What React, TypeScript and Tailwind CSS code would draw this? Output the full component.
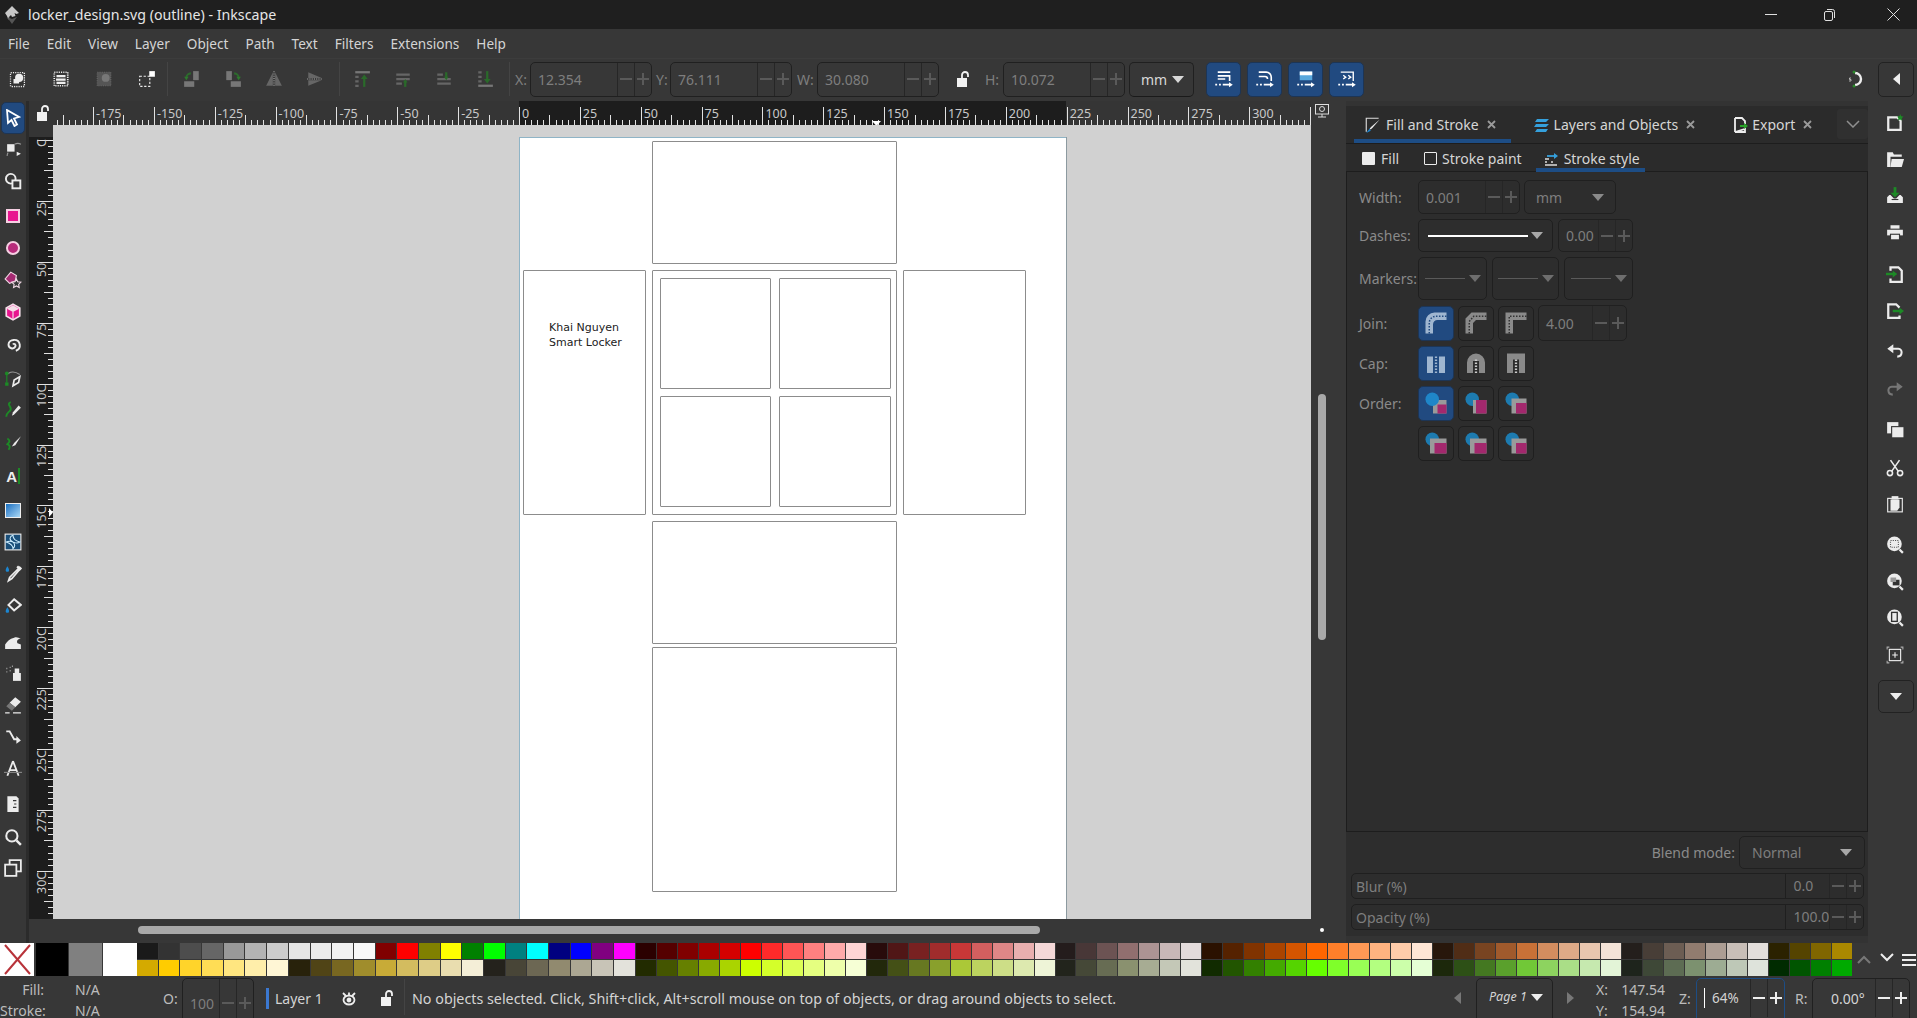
import { ReactNode } from "react";
import clsx from "clsx";

const MENU = ["File", "Edit", "View", "Layer", "Object", "Path", "Text", "Filters", "Extensions", "Help"];

const PALETTE_TOP = [
  "#1a1a1a", "#333333", "#4d4d4d", "#666666", "#999999", "#b3b3b3", "#cccccc", "#e6e6e6", "#ececec", "#f2f2f2", "#f9f9f9",
  "#800000", "#ff0000", "#808000", "#ffff00", "#008000", "#00ff00", "#008080", "#00ffff", "#000080", "#0000ff", "#800080", "#ff00ff",
  "#2b0000", "#550000", "#800000", "#aa0000", "#d40000", "#ff0000", "#ff2a2a", "#ff5555", "#ff8080", "#ffaaaa", "#ffd5d5",
  "#280b0b", "#501616", "#782121", "#a02c2c", "#c83737", "#d35f5f", "#de8787", "#e9afaf", "#f4d7d7",
  "#241c1c", "#483737", "#6c5353", "#916f6f", "#ac9393", "#c8b7b7", "#e3dbdb",
  "#2b1100", "#552200", "#803300", "#aa4400", "#d45500", "#ff6600", "#ff7f2a", "#ff9955", "#ffb380", "#ffccaa", "#ffe6d5",
  "#28170b", "#502d16", "#784421", "#a05a2c", "#c87137", "#d38d5f", "#deaa87", "#e9c6af", "#f4e3d7",
  "#241f1c", "#483e37", "#6c5d53", "#917c6f", "#ac9d93", "#c8beb7", "#e3dedb",
  "#2b2200", "#554400", "#806600", "#aa8800",
];

const PALETTE_BOTTOM = [
  "#d4aa00", "#ffcc00", "#ffd42a", "#ffdd55", "#ffe680", "#ffeeaa", "#fff6d5",
  "#28220b", "#504416", "#786721", "#a08d2c", "#c8ab37", "#d3bc5f", "#decd87", "#e9ddaf", "#f4eed7",
  "#24221c", "#484537", "#6c6753", "#918a6f", "#aca793", "#c8c4b7", "#e3e2db",
  "#222b00", "#445500", "#668000", "#88aa00", "#aad400", "#ccff00", "#d4ff2a", "#ddff55", "#e5ff80", "#eeffaa", "#f6ffd5",
  "#22280b", "#445016", "#677821", "#89a02c", "#abc837", "#bcd35f", "#cdde87", "#dde9af", "#eef4d7",
  "#22241c", "#454837", "#676c53", "#8a916f", "#a7ac93", "#c4c8b7", "#e2e3db",
  "#112b00", "#225500", "#338000", "#44aa00", "#55d400", "#66ff00", "#7fff2a", "#99ff55", "#b3ff80", "#ccffaa", "#e5ffd5",
  "#1c280b", "#2d5016", "#447821", "#5aa02c", "#71c837", "#8dd35f", "#aade87", "#c6e9af", "#e3f4d7",
  "#1e241c", "#3e4837", "#5d6c53", "#7c916f", "#9dac93", "#bec8b7", "#dee3db",
  "#002b00", "#005500", "#008000", "#00aa00",
];

function Ic({ children, size = 18, className }: { children: ReactNode; size?: number; className?: string }) {
  return (
    <svg width={size} height={size} viewBox="0 0 16 16" fill="none" className={clsx("shrink-0", className)}>
      {children}
    </svg>
  );
}

function Caret({ color = "#d8d8d8", className }: { color?: string; className?: string }) {
  return (
    <svg width="12" height="7" viewBox="0 0 12 7" className={clsx("shrink-0", className)}>
      <path d="M0 0h12L6 7z" fill={color} />
    </svg>
  );
}

function Lock({ className }: { className?: string }) {
  return (
    <svg width="13" height="16" viewBox="0 0 13 16" className={clsx("shrink-0", className)}>
      <rect x="0" y="7" width="10" height="9" fill="#f2f2f2" />
      <path d="M5 7V4a3 3 0 0 1 6 0v2" fill="none" stroke="#f2f2f2" strokeWidth="1.8" />
    </svg>
  );
}

function PlusMinus({ color }: { color: string }) {
  return (
    <>
      <div className="flex h-full w-[17px] items-center justify-center border-l border-[#262626]">
        <div className="h-[2px] w-[12px]" style={{ background: color }} />
      </div>
      <div className="relative flex h-full w-[17px] items-center justify-center border-l border-[#262626]">
        <div className="h-[2px] w-[12px]" style={{ background: color }} />
        <div className="absolute h-[12px] w-[2px]" style={{ background: color }} />
      </div>
    </>
  );
}

function Spin({ value, className, bright, textClass }: { value: string; className?: string; bright?: boolean; textClass?: string }) {
  return (
    <div className={clsx("flex items-center overflow-hidden rounded-[5px] border border-[#202020]", className)}>
      <span className={clsx("flex-1 pl-[7px] text-[14px]", bright ? "text-[#d8d8d8]" : "text-[#7e7e7e]", textClass)}>{value}</span>
      <PlusMinus color={bright ? "#e8e8e8" : "#5a5a5a"} />
    </div>
  );
}

function ToolbarIcons() {
  const dots = { stroke: "#eee", strokeDasharray: "1 1", strokeWidth: 1.5 };
  return (
    <>
      <div className="flex w-[167px] items-center pl-[9px] gap-[25px]">
        <Ic><rect x="1.5" y="2.5" width="12" height="12" {...dots} /><rect x="2" y="3" width="11" height="11" fill="#333" /><circle cx="9" cy="7" r="3.6" fill="#eee" /><rect x="4" y="8" width="5" height="4" fill="#eee" /></Ic>
        <Ic><rect x="2" y="2" width="12" height="12" {...dots} /><path d="M4 5.5h8M3.6 8.5h8.5M4 11.5h8" stroke="#eee" strokeWidth="2" /></Ic>
        <Ic><rect x="2" y="2" width="12" height="12" fill="#555" stroke="#666" strokeDasharray="1 1" /><circle cx="9.5" cy="7" r="3.5" fill="#777" /></Ic>
        <Ic><rect x="1.5" y="5.5" width="9" height="9" stroke="#eee" strokeDasharray="2 1.5" /><rect x="10" y="1" width="5" height="5" fill="#fff" /></Ic>
      </div>
      <div className="h-[34px] w-px bg-[#444]" />
      <div className="flex w-[171px] items-center gap-[23px] pl-[15px]">
        <Ic><rect x="9" y="1" width="5" height="8" fill="#777" /><rect x="1" y="10" width="9" height="5" fill="#777" /><path d="M7 3a4 4 0 0 0-4 4" stroke="#2d6b2d" strokeWidth="1.8" /><path d="M1 6h4L3 9z" fill="#2d7a2d" /></Ic>
        <Ic><rect x="2" y="1" width="5" height="8" fill="#777" /><rect x="6" y="10" width="9" height="5" fill="#777" /><path d="M9 3a4 4 0 0 1 4 4" stroke="#2d6b2d" strokeWidth="1.8" /><path d="M11 6h4l-2 3z" fill="#2d7a2d" /></Ic>
        <Ic><path d="M7 2v12H1zM9 2l6 12H9z" fill="#666" /><path d="M8 1v14" stroke="#aaa" strokeDasharray="1 1" /></Ic>
        <Ic><path d="M2 2l12 5H2zM2 14l12-5H2z" fill="#666" /><path d="M1 8h14" stroke="#aaa" strokeDasharray="1 1" /></Ic>
      </div>
      <div className="h-[34px] w-px bg-[#444]" />
      <div className="flex w-[169px] items-center gap-[23px] pl-[13px]">
        <Ic><path d="M2 2h13" stroke="#777" strokeWidth="2" /><path d="M2 6h3M2 10h3M2 14h3" stroke="#666" strokeWidth="2" /><path d="M10 15V6" stroke="#2a6a2a" strokeWidth="2" /><path d="M7 8l3-4 3 4z" fill="#2a6a2a" /></Ic>
        <Ic><path d="M2 4h12M2 8h12M2 12h5" stroke="#666" strokeWidth="2" /><path d="M10 15v-5" stroke="#2a6a2a" strokeWidth="2" /><path d="M8 11l2-3 2 3z" fill="#2a6a2a" /></Ic>
        <Ic><path d="M2 4h5M2 8h12M2 12h12" stroke="#666" strokeWidth="2" /><path d="M10 2v5" stroke="#2a6a2a" strokeWidth="2" /><path d="M8 6l2 3 2-3z" fill="#2a6a2a" /></Ic>
        <Ic><path d="M2 14h13" stroke="#777" strokeWidth="2" /><path d="M2 2h3M2 6h3M2 10h3" stroke="#666" strokeWidth="2" /><path d="M10 1v9" stroke="#2a6a2a" strokeWidth="2" /><path d="M7 8l3 4 3-4z" fill="#2a6a2a" /></Ic>
      </div>
      <div className="h-[34px] w-px bg-[#444]" />
    </>
  );
}

function SnapIcon({ glyph }: { glyph: ReactNode }) {
  return (
    <div className="flex h-[35px] w-[35px] items-center justify-center rounded-[5px] border border-[#1d3555] bg-[#214a80]">
      <Ic size={20}>
        {glyph}
        <path d="M1 12.5h1.5M4 12.5h1.5M7 12.5h6" stroke="#fff" strokeWidth="1.5" />
        <path d="M12 10.5l3 2-3 2z" fill="#fff" />
      </Ic>
    </div>
  );
}

function TopBars() {
  return (
    <>
      <div className="flex h-[29px] items-center bg-[#1f1f1f]">
        <svg width="18" height="20" viewBox="0 0 18 20" className="ml-[3px]">
          <path d="M9 1l7 7-2.5 1-2-1 1 3-3.5 1-1-2-2 2 1 3-2-1-1-3L2 8z" fill="#c8c8c8" />
          <path d="M4 12l5 2 5-2-5 7z" fill="#555" />
        </svg>
        <span className="ml-[7px] text-[14.2px] text-[#e6e6e6]">locker_design.svg (outline) - Inkscape</span>
        <div className="ml-auto flex items-center">
          <div className="mr-[46px] h-px w-[12px] bg-[#e0e0e0]" />
          <svg width="13" height="13" viewBox="0 0 13 13" className="mr-[51px]" fill="none" stroke="#e0e0e0">
            <rect x="1.5" y="3.5" width="8" height="9" rx="1.5" />
            <path d="M4 1.5h5.5a2 2 0 0 1 2 2V10" />
          </svg>
          <svg width="13" height="13" viewBox="0 0 13 13" className="mr-[17px]" stroke="#e0e0e0">
            <path d="M.5.5l12 12M12.5.5l-12 12" />
          </svg>
        </div>
      </div>
      <div className="flex h-[29px] items-center gap-[17px] bg-[#373737] pl-[8px] pt-[2px] text-[13.6px] text-[#d4d4d4]">
        {MENU.map((item) => (
          <span key={item}>{item}</span>
        ))}
      </div>
      <div className="flex h-[43px] items-center border-t border-[#3c3c3c] bg-[#373737] pb-[2px]">
        <ToolbarIcons />
        <span className="ml-[5px] w-[15px] text-[14px] text-[#7e7e7e]">X:</span>
        <Spin value="12.354" className="h-[35px] w-[122px]" />
        <span className="ml-[4px] w-[14px] text-[14px] text-[#7e7e7e]">Y:</span>
        <Spin value="76.111" className="h-[35px] w-[122px]" />
        <span className="ml-[5px] w-[20px] text-[14px] text-[#7e7e7e]">W:</span>
        <Spin value="30.080" className="h-[35px] w-[122px]" />
        <Lock className="ml-[18px]" />
        <span className="ml-[15px] w-[18px] text-[14px] text-[#7e7e7e]">H:</span>
        <Spin value="10.072" className="h-[35px] w-[122px]" />
        <div className="ml-[4px] flex h-[35px] w-[65px] items-center gap-[5px] rounded-[5px] border border-[#202020] border-b-[#1a1a1a] pl-[11px] text-[14px] text-[#d8d8d8]">
          mm <Caret />
        </div>
        <div className="ml-[12px] flex gap-[6px]">
          <SnapIcon glyph={<path d="M3 2.5h10M3 5.5h9.5v4M3 8h6" stroke="#fff" strokeWidth="1.3" />} />
          <SnapIcon glyph={<path d="M3 2.5h6a4 4 0 0 1 4 4v3M3 6h5a2 2 0 0 1 2 2" stroke="#fff" strokeWidth="1.3" />} />
          <SnapIcon glyph={<><rect x="3" y="2" width="10" height="7" fill="#59a8dd" /><path d="M3 2h10v3H3z" fill="#fff" /></>} />
          <SnapIcon glyph={<path d="M3 2.5h10v7M5 5l2 1.5L5 8M9 5l2 1.5L9 8" stroke="#fff" strokeWidth="1.1" />} />
        </div>
        <div className="ml-auto flex items-center">
          <svg width="20" height="20" viewBox="0 0 20 20" className="mr-[13px]" fill="none">
            <path d="M10 4a6 6 0 0 1 0 12" stroke="#eee" strokeWidth="2.4" />
            <circle cx="9" cy="3" r="1.5" fill="#2a8a2a" />
            <circle cx="9" cy="17" r="1.5" fill="#2a8a2a" />
            <path d="M6 9H4.500v1.500H6V12H4" stroke="#ccc" strokeWidth=".8" />
          </svg>
          <div className="mr-[3px] flex h-[35px] w-[36px] items-center justify-center rounded-[5px] border border-[#222]">
            <svg width="7" height="12" viewBox="0 0 7 12"><path d="M7 0v12L0 6z" fill="#eee" /></svg>
          </div>
        </div>
      </div>
    </>
  );
}

function ToolIcon({ y, children }: { y: string; children: ReactNode }) {
  return <div className={clsx("absolute left-[3px] flex h-[20px] w-[20px] items-center justify-center", y)}>{children}</div>;
}

function LeftTools() {
  const w = "#ececec";
  const g = "#1d8a26";
  const b = "#1c86d1";
  return (
    <div className="relative h-full w-[29px] shrink-0 border-r-[3px] border-[#2b2b2b] bg-[#373737]">
      <div className="absolute left-[1px] top-[1px] flex h-[32px] w-[24px] items-center justify-center rounded-[5px] border border-[#1d3555] bg-[#214a80]">
        <svg width="16" height="18" viewBox="0 0 16 18"><path d="M2 1l12 7-5 1.500 3 6-2.500 1.500-3-6L3 14z" fill="#214a80" stroke="#fff" strokeWidth="1.800" /></svg>
      </div>
      <ToolIcon y="top-[38px]"><Ic size={17}><rect x="2" y="3" width="7" height="7" fill={w} /><path d="M9 3c2-1 4-1 6 0M2 14c0-1 0-2 1-3" stroke="#999" /><path d="M11 10l4 2-4 2z" fill={w} /></Ic></ToolIcon>
      <ToolIcon y="top-[70px]"><Ic size={18}><circle cx="6" cy="6" r="4.300" stroke={w} strokeWidth="1.700" /><rect x="7.500" y="7.500" width="7" height="7" stroke={w} strokeWidth="1.700" fill="#373737" /></Ic></ToolIcon>
      <ToolIcon y="top-[105px]"><div className="h-[14px] w-[14px] border-2 border-[#f5cfe2] bg-[#e8158f]" /></ToolIcon>
      <ToolIcon y="top-[137px]"><div className="h-[14px] w-[14px] rounded-full border-2 border-[#f5cfe2] bg-[#b82a7b]" /></ToolIcon>
      <ToolIcon y="top-[169px]"><Ic size={18}><path d="M6 1l5 3-1 5-5 2-4-4z" fill="#a52a72" stroke="#f0d8e4" /><path d="M11 7l1.200 2.500 2.800.4-2 2 .5 2.800-2.500-1.400-2.500 1.400.5-2.800-2-2 2.800-.4z" fill="#373737" stroke="#f0d8e4" /></Ic></ToolIcon>
      <ToolIcon y="top-[201px]"><Ic size={18}><path d="M8 1l6 3.500v7L8 15l-6-3.500v-7z" fill="#e8158f" stroke="#f5dfe9" strokeWidth="1.500" /><path d="M2.500 5L8 8l5.500-3L8 2z" fill="#f5dfe9" /><path d="M8 8v7" stroke="#f5dfe9" /></Ic></ToolIcon>
      <ToolIcon y="top-[233px]"><Ic size={18}><path d="M8 8.500c1-1.500 3 0 2 2-1.500 2.500-6 1.500-6-2 0-5 9-6 10 0 .5 3.500-2 5-3.500 5.500" stroke={w} strokeWidth="1.700" /></Ic></ToolIcon>
      <ToolIcon y="top-[268px]"><Ic size={18}><rect x="1" y="11" width="3" height="3" fill={g} /><circle cx="2.500" cy="3" r="1.700" fill={g} /><path d="M2.500 4v7" stroke={g} /><path d="M4 3c3-2 7-1 10 1" stroke="#999" /><path d="M14 6l-1 5-5 3 1-5z" fill="#373737" stroke={w} strokeWidth="1.500" /></Ic></ToolIcon>
      <ToolIcon y="top-[299px]"><Ic size={18}><path d="M6 1C1 3 9 6 5 9c-2 2-3 2-3 5" stroke={g} strokeWidth="1.700" /><path d="M9 12l-2 1 1-3 5-6 2 2z" fill={w} /></Ic></ToolIcon>
      <ToolIcon y="top-[332px]"><Ic size={18}><path d="M3 4c3 2 2 3 0 5 2 1 3 2 1 5" stroke={g} strokeWidth="1.700" /><path d="M15 2L9 8l-2 3 3-1z" fill={w} /></Ic></ToolIcon>
      <ToolIcon y="top-[365px]"><span className="font-['Liberation_Sans'] text-[15px] font-bold leading-none text-[#eee]">A</span><div className="ml-[1px] h-[16px] w-[1.500px] bg-[#1d8a26]" /></ToolIcon>
      <ToolIcon y="top-[399px]"><div className="h-[15px] w-[16px] border border-[#eee] bg-gradient-to-br from-[#0f6fc0] to-[#a8d8f5]" /></ToolIcon>
      <ToolIcon y="top-[431px]"><Ic size={18}><rect x="1" y="1" width="14" height="14" fill="#1a4f7a" stroke={w} /><path d="M8 8c-4-2-3-5 0-6 0 3 2 5 6 6-3 2-5 0-6 0 3 3 1 5 0 6 0-3-3-5-6-6 2-1 4-1 6 0" stroke="#cdeeff" strokeWidth=".9" /></Ic></ToolIcon>
      <ToolIcon y="top-[463px]"><Ic size={18}><path d="M3 1c2 3 2 5 0 5s-2-2 0-5z" fill={b} /><path d="M14 2l1 1-2 2-6 7-3 2 1-3 7-7z" fill="#373737" stroke={w} strokeWidth="1.500" /><path d="M11 2l3 3 1.500-1.500-3-3z" fill={w} /></Ic></ToolIcon>
      <ToolIcon y="top-[495px]"><Ic size={18}><path d="M9 2l6 5-6 5-5-5z" fill="#373737" stroke={w} strokeWidth="1.800" /><path d="M3 9c2 3 2 5 0 5s-2-2 0-5z" fill={b} /></Ic></ToolIcon>
      <ToolIcon y="top-[530px]"><Ic size={18}><path d="M1 15v-4c2-3 4-5 8-6 2-1 4 0 6 1-3 0-4 2-3 4l3 1v4z" fill={w} /></Ic></ToolIcon>
      <ToolIcon y="top-[562px]"><Ic size={18}><rect x="8" y="8" width="7" height="7" fill={w} /><rect x="9.500" y="4" width="4" height="4" fill={w} /><path d="M2 4h1M5 3h1M2 7h1M5 6h1M7 2h1" stroke="#999" strokeWidth="1.200" /></Ic></ToolIcon>
      <ToolIcon y="top-[594px]"><Ic size={18}><path d="M10 1l5 4-5 5-5-4z" fill={w} /><path d="M5 6l5 4-3 3-5-4z" fill="#777" /><path d="M1 15h4M8 15h7" stroke={w} strokeWidth="1.200" /></Ic></ToolIcon>
      <ToolIcon y="top-[626px]"><Ic size={18}><path d="M2 3l3 0 4 7 3 0" stroke={w} strokeWidth="1.700" /><path d="M11 7l4 4-4 3z" fill={w} /></Ic></ToolIcon>
      <ToolIcon y="top-[658px]"><Ic size={18}><path d="M8 1L3 14M8 1l5 13M5 9h6" stroke={w} strokeWidth="1.600" /><path d="M0 11h16" stroke="#888" /></Ic></ToolIcon>
      <ToolIcon y="top-[693px]"><Ic size={18}><path d="M3 1h8l2 2v12H3z" fill={w} /><path d="M8 5h3M9 8h2M8 11h3" stroke="#373737" /></Ic></ToolIcon>
      <ToolIcon y="top-[726px]"><Ic size={18}><circle cx="7" cy="7" r="5" stroke={w} strokeWidth="1.800" /><path d="M11 11l4 4" stroke={w} strokeWidth="2.200" /></Ic></ToolIcon>
      <ToolIcon y="top-[757px]"><Ic size={18}><rect x="1" y="5" width="10" height="10" stroke={w} strokeWidth="1.600" /><path d="M5 5V1h10v10h-4" stroke={w} strokeWidth="1.600" /></Ic></ToolIcon>
    </div>
  );
}

function HRuler() {
  const origin = 466;
  const step = 60.85 / 10;
  const ticks = Array.from({ length: 208 }, (_, i) => i - 77);
  return (
    <svg width="1258" height="24" className="block">
      <rect width="1258" height="24" fill="#353535" />
      <rect x={origin} width="547" height="24" fill="#1d1d1d" />
      {ticks.map((i) => {
        const x = Math.round(origin + i * step) + 0.5;
        const major = i % 10 === 0;
        const mid = i % 5 === 0;
        return <line key={i} x1={x} x2={x} y1={major ? 6 : mid ? 14 : 19} y2={24} stroke="#e2e2e2" />;
      })}
      {ticks
        .filter((i) => i % 10 === 0)
        .map((i) => (
          <text key={i} x={origin + i * step + 3} y={17} fontSize="12.500" fontFamily="Noto Sans, sans-serif" fill="#c9c9c9">
            {i * 2.5}
          </text>
        ))}
      <path d="M819 20h9l-4.500 5z" fill="#fff" />
    </svg>
  );
}

function VRuler() {
  const origin = 15;
  const step = 60.9 / 10;
  const ticks = Array.from({ length: 130 }, (_, i) => i);
  const label = (v: number) => {
    const s = String(v);
    return v === 0 ? "C" : v >= 100 && s.endsWith("0") ? s.slice(0, -1) + "C" : s;
  };
  return (
    <svg width="24" height="794" className="block">
      <rect width="24" height="794" fill="#1d1d1d" />
      <rect width="24" height="12" fill="#353535" />
      {ticks.map((i) => {
        const y = Math.round(origin + i * step) + 0.5;
        const major = i % 10 === 0;
        const mid = i % 5 === 0;
        return <line key={i} y1={y} y2={y} x1={major ? 8 : mid ? 15 : 19} x2={24} stroke="#e2e2e2" />;
      })}
      {ticks
        .filter((i) => i % 10 === 0)
        .map((i) => (
          <text key={i} transform={`translate(17 ${i === 0 ? origin - 1 : origin + i * step + 1}) rotate(-90)`} textAnchor="end" fontSize="12.500" fontFamily="Noto Sans, sans-serif" fill="#c9c9c9">
            {label(i * 2.5)}
          </text>
        ))}
      <path d="M20 383l4 4.500-4 4.500z" fill="#fff" />
    </svg>
  );
}

function Canvas() {
  const box = "absolute rounded-[1px] border border-[#8c8c8c]";
  return (
    <div className="relative h-[794px] w-[1258px] overflow-hidden bg-[#d1d1d1]">
      <div className="absolute left-[466px] top-[12px] h-[800px] w-[547px] border-l border-t border-[#8fb4c6] bg-white shadow-[1px_0_0_#8c9aa0]">
        <div className={clsx(box, "left-[132px] top-[3px] h-[123px] w-[245px]")} />
        <div className={clsx(box, "left-[3px] top-[132px] h-[245px] w-[123px]")}>
          <div className="absolute left-[25px] top-[49px] font-['DejaVu_Sans'] text-[11px] leading-[15px] text-[#222]">
            <div>Khai Nguyen</div>
            <div>Smart Locker</div>
          </div>
        </div>
        <div className={clsx(box, "left-[132px] top-[132px] h-[245px] w-[245px]")} />
        <div className={clsx(box, "left-[140px] top-[140px] h-[111px] w-[111px]")} />
        <div className={clsx(box, "left-[259px] top-[140px] h-[111px] w-[112px]")} />
        <div className={clsx(box, "left-[140px] top-[258px] h-[111px] w-[111px]")} />
        <div className={clsx(box, "left-[259px] top-[258px] h-[111px] w-[112px]")} />
        <div className={clsx(box, "left-[383px] top-[132px] h-[245px] w-[123px]")} />
        <div className={clsx(box, "left-[132px] top-[383px] h-[123px] w-[245px]")} />
        <div className={clsx(box, "left-[132px] top-[509px] h-[245px] w-[245px]")} />
      </div>
    </div>
  );
}

function Workspace() {
  return (
    <div className="grid w-[1317px] shrink-0 grid-cols-[24px_1258px_35px] grid-rows-[24px_794px_24px] bg-[#373737]">
      <div className="flex items-center justify-center bg-[#353535] pl-[4px]">
        <Lock />
      </div>
      <HRuler />
      <div className="flex items-start justify-start pl-[4px] pt-[3px]">
        <svg width="14" height="14" viewBox="0 0 14 14" fill="none" stroke="#ddd">
          <rect x=".5" y=".5" width="13" height="9.500" />
          <circle cx="7" cy="5" r="2.500" />
          <path d="M7 10v3M3 13h8" />
        </svg>
      </div>
      <VRuler />
      <Canvas />
      <div className="relative">
        <div className="absolute left-[7px] top-[269px] h-[246px] w-[8px] rounded-full bg-[#a9a9a9]" />
      </div>
      <div />
      <div className="relative">
        <div className="absolute left-[85px] top-[7px] h-[8px] w-[902px] rounded-full bg-[#a9a9a9]" />
      </div>
      <div className="relative">
        <div className="absolute left-[9px] top-[9px] h-[4px] w-[4px] rounded-full bg-white" />
      </div>
    </div>
  );
}

function Tab({ icon, label, className, closeClass }: { icon: ReactNode; label: string; className?: string; closeClass?: string }) {
  return (
    <div className={clsx("flex h-full items-center", className)}>
      {icon}
      <span className="ml-[4px] text-[14px] text-[#d6d6d6]">{label}</span>
      <svg width="9" height="9" viewBox="0 0 9 9" stroke="#9a9a9a" strokeWidth="1.800" className={clsx("ml-[8px]", closeClass)}>
        <path d="M1 1l7 7M8 1l-7 7" />
      </svg>
    </div>
  );
}

function Square({ active, children }: { active?: boolean; children: ReactNode }) {
  return (
    <div className={clsx("flex h-[35px] w-[36px] items-center justify-center rounded-[5px] border", active ? "border-[#1d3555] bg-[#214a80]" : "border-[#1f1f1f]")}>
      <Ic size={24}>{children}</Ic>
    </div>
  );
}

function Order({ active, variant }: { active?: boolean; variant: number }) {
  const blue = active ? "#1f86c9" : "#1d7bb0";
  const pink = "#a3286d";
  const grey = "#9a9a9a";
  return (
    <Square active={active}>
      {variant === 0 ? (
        <>
          <rect x="6" y="6" width="9" height="9" fill={grey} />
          <rect x="9" y="9" width="6" height="6" fill={pink} />
          <circle cx="5.500" cy="5.500" r="4.500" fill={blue} />
        </>
      ) : variant === 1 ? (
        <>
          <circle cx="5.500" cy="5.500" r="4.500" fill={blue} />
          <rect x="6" y="6" width="9" height="9" fill={grey} />
          <rect x="8" y="6" width="7" height="9" fill={pink} />
        </>
      ) : variant === 2 ? (
        <>
          <circle cx="5.500" cy="5.500" r="4.500" fill={blue} />
          <rect x="5" y="5" width="10" height="10" fill={grey} />
          <rect x="8" y="8" width="7" height="7" fill={pink} />
        </>
      ) : (
        <>
          <circle cx="5.500" cy="5.500" r="4.500" fill={blue} />
          <rect x="4" y="5" width="11" height="10" fill={grey} />
          <rect x="7" y="8" width="8" height="7" fill={pink} />
        </>
      )}
    </Square>
  );
}

function Label({ children, className = "w-[59px]" }: { children?: ReactNode; className?: string }) {
  return <span className={clsx("shrink-0 text-[14px] text-[#8a8a8a]", className)}>{children}</span>;
}

function MarkerSelect({ className }: { className: string }) {
  return (
    <div className={clsx("flex h-[43px] items-center justify-center gap-[4px] rounded-[5px] border border-[#1f1f1f]", className)}>
      <div className="h-px w-[40px] bg-[#5a5a5a]" />
      <Caret color="#6e6e6e" />
    </div>
  );
}

function Panel() {
  return (
    <div className="flex w-[522px] shrink-0 flex-col bg-[#333333] pt-[5px]">
      <div className="relative flex h-[37px] items-center bg-[#2b2b2b]">
        <div className="absolute bottom-0 left-[8px] h-[4px] w-[157px] bg-[#1d4d85]" />
        <Tab
          className="ml-[18px]"
          icon={
            <Ic size={18}>
              <path d="M13 2H2v12" stroke="#ddd" />
              <path d="M14 3L7 9l-2 2 1 1 2-2z" fill="#eee" />
              <path d="M5 11l-3 4 4-2z" fill="#1c86d1" />
            </Ic>
          }
          label="Fill and Stroke"
        />
        <Tab
          className="ml-[38px]"
          icon={
            <Ic size={16}>
              <path d="M3 2h12l-3 3H1zM2 7h13l-3 3H0zM3 12h11l-2 3H1z" fill="#35a0dc" />
            </Ic>
          }
          label="Layers and Objects"
        />
        <Tab
          className="ml-[37px]"
          icon={
            <Ic size={16}>
              <path d="M3 1h7l3 3v3M13 12v3H3z" stroke="#eee" strokeWidth="1.800" />
              <path d="M3 1v14" stroke="#eee" strokeWidth="1.800" />
              <path d="M8 9h5" stroke="#29a329" strokeWidth="2" />
              <path d="M12 6l4 3-4 3z" fill="#29a329" />
            </Ic>
          }
          label="Export"
        />
        <div className="absolute right-0 top-[3px] flex h-[30px] w-[31px] items-center justify-center rounded-[3px] bg-[#303030]">
          <svg width="14" height="8" viewBox="0 0 14 8" fill="none" stroke="#8f8f8f" strokeWidth="1.500"><path d="M1 1l6 6 6-6" /></svg>
        </div>
      </div>
      <div className="relative flex h-[29px] items-center border-y border-[#1d1d1d] bg-[#2b2b2b] pt-[2px] text-[14px] text-[#d6d6d6]">
        <div className="ml-[16px] h-[13px] w-[13px] rounded-[1px] bg-[#ececec]" />
        <span className="ml-[6px]">Fill</span>
        <div className="ml-[25px] h-[13px] w-[13px] rounded-[1px] border-[1.500px] border-[#ececec]" />
        <span className="ml-[5px]">Stroke paint</span>
        <Ic size={16} className="ml-[22px]">
          <path d="M1 8h4M1 14h12" stroke="#ddd" strokeWidth="1.500" />
          <path d="M3 5h8" stroke="#35a0dc" strokeWidth="1.800" />
          <path d="M10 2l4 3-4 3z" fill="#35a0dc" />
          <path d="M7 11h2M1 11h2" stroke="#ddd" strokeWidth="1.500" />
        </Ic>
        <span className="ml-[4px]">Stroke style</span>
        <div className="absolute bottom-[-1px] left-[190px] h-[4px] w-[109px] bg-[#1d4d85]" />
      </div>
      <div className="flex h-[660px] flex-col gap-[5px] border border-t-0 border-[#1d1d1d] bg-[#2d2d2d] pl-[12px] pt-[8px]">
        <div className="flex h-[34px] items-center">
          <Label>Width:</Label>
          <Spin value="0.001" className="h-[34px] w-[102px]" />
          <div className="ml-[4px] flex h-[34px] w-[92px] items-center justify-between rounded-[5px] border border-[#202020] pl-[11px] pr-[11px] text-[14px] text-[#7e7e7e]">
            mm <Caret color="#8a8a8a" />
          </div>
        </div>
        <div className="flex h-[33px] items-center">
          <Label>Dashes:</Label>
          <div className="flex h-[33px] w-[135px] items-center rounded-[5px] border border-[#1f1f1f] pl-[9px]">
            <div className="h-[2px] w-[100px] bg-white" />
            <Caret color="#a8a8a8" className="ml-[3px]" />
          </div>
          <Spin value="0.00" className="ml-[5px] h-[33px] w-[75px]" />
        </div>
        <div className="flex h-[43px] items-center">
          <Label>Markers:</Label>
          <MarkerSelect className="w-[69px]" />
          <MarkerSelect className="ml-[5px] w-[67px]" />
          <MarkerSelect className="ml-[5px] w-[69px]" />
        </div>
        <div className="flex h-[36px] items-center gap-[4px]">
          <Label className="w-[55px]">Join:</Label>
          <Square active><path d="M1 15V7a6 6 0 0 1 6-6h8v5H9a3 3 0 0 0-3 3v6z" fill="#9fb6d0" /><path d="M3.500 15V8a4.500 4.500 0 0 1 4.500-4.500H15" stroke="#214a80" strokeDasharray="1 1" /></Square>
          <Square><path d="M1 15V5l4-4h10v5H8L6 8v7z" fill="#8a8a8a" /><path d="M3.500 15V7l3-3.500H15" stroke="#333" strokeDasharray="1 1" /></Square>
          <Square><path d="M1 15V1h14v5H6v9z" fill="#8a8a8a" /><path d="M3.500 15V3.500H15" stroke="#333" strokeDasharray="1 1" /></Square>
          <Spin value="4.00" className="h-[36px] w-[89px]" />
        </div>
        <div className="flex h-[35px] items-center gap-[4px]">
          <Label className="w-[55px]">Cap:</Label>
          <Square active><path d="M2 3h4v11H2zM10 3h4v11h-4z" fill="#9fb6d0" /><path d="M8 3v11" stroke="#9fb6d0" strokeDasharray="1 1" strokeWidth="1.500" /></Square>
          <Square><path d="M2 14V7a6 6 0 0 1 12 0v7h-4V6H6v8z" fill="#8a8a8a" /><path d="M8 5v9" stroke="#ccc" strokeDasharray="1 1" strokeWidth="1.500" /></Square>
          <Square><path d="M2 14V1h12v13h-4V5H6v9z" fill="#8a8a8a" /><path d="M8 5v9" stroke="#ccc" strokeDasharray="1 1" strokeWidth="1.500" /></Square>
        </div>
        <div className="flex h-[34px] items-center gap-[4px]">
          <Label className="w-[55px]">Order:</Label>
          <Order active variant={0} />
          <Order variant={1} />
          <Order variant={2} />
        </div>
        <div className="mt-[1px] flex h-[34px] items-center gap-[4px]">
          <Label className="w-[55px]" />
          <Order variant={3} />
          <Order variant={3} />
          <Order variant={2} />
        </div>
      </div>
      <div className="flex flex-col bg-[#2d2d2d] pt-[4px] pb-[6px] pl-[5px] pr-[4px] text-[14px] text-[#7e7e7e]">
        <div className="flex h-[33px] items-center justify-end">
          <span className="mr-[4px] text-[#8a8a8a]">Blend mode:</span>
          <div className="mr-[-1px] flex h-[33px] w-[126px] items-center justify-between rounded-[5px] border border-[#202020] px-[12px]">
            Normal <Caret color="#a8a8a8" />
          </div>
        </div>
        <div className="mt-[4px] flex h-[26px] items-center overflow-hidden rounded-[5px] border border-[#1f1f1f]">
          <span className="w-[436px] pl-[4px]">Blur (%)</span>
          <span className="h-full w-[44px] border-l border-[#1f1f1f] pl-[7px] leading-[24px]">0.0</span>
          <PlusMinus color="#5a5a5a" />
        </div>
        <div className="mt-[5px] flex h-[26px] items-center overflow-hidden rounded-[5px] border border-[#1f1f1f]">
          <span className="w-[436px] pl-[4px]">Opacity (%)</span>
          <span className="h-full w-[44px] border-l border-[#1f1f1f] pl-[7px] leading-[24px]">100.0</span>
          <PlusMinus color="#5a5a5a" />
        </div>
      </div>
    </div>
  );
}

function RightTool({ y, children }: { y: string; children: ReactNode }) {
  return <div className={clsx("absolute left-[17px] flex h-[20px] w-[20px] items-center justify-center", y)}>{children}</div>;
}

function RightTools() {
  const w = "#ececec";
  const g = "#1d8a26";
  return (
    <div className="relative w-[49px] shrink-0 bg-[#373737]">
      <RightTool y="top-[12px]"><Ic><path d="M2 3h8l3 3v8H2z" stroke={w} strokeWidth="2" /><path d="M12.500 0l1 2 2 .3-1.500 1.500.4 2-1.900-1-1.900 1 .4-2L10 2.300l2-.3z" fill={g} /></Ic></RightTool>
      <RightTool y="top-[48px]"><Ic><path d="M1 2h5l1 2h7v2H4v9H1z" fill={w} /><path d="M5 8h11l-2 7H4z" fill={w} /></Ic></RightTool>
      <RightTool y="top-[84px]"><Ic><path d="M8 1v6" stroke={g} strokeWidth="2.500" /><path d="M4 6h8l-4 4z" fill={g} /><path d="M1 10l2-2v0h1l3 3h2l3-3h1l2 2v5H1z" fill={w} /><path d="M5 12h6" stroke="#373737" /></Ic></RightTool>
      <RightTool y="top-[121px]"><Ic><rect x="4" y="2" width="8" height="3" fill={w} /><rect x="1" y="6" width="14" height="5" fill={w} /><rect x="4" y="10" width="8" height="5" fill={w} stroke="#373737" /></Ic></RightTool>
      <RightTool y="top-[163px]"><Ic><path d="M4 5V2h7l3 3v10H4v-3" stroke={w} strokeWidth="2" /><path d="M0 8h7" stroke={g} strokeWidth="2.200" /><path d="M6 5l4 3-4 3z" fill={g} /></Ic></RightTool>
      <RightTool y="top-[200px]"><Ic><path d="M12 5l-3-3H2v12h10v-2" stroke={w} strokeWidth="2" /><path d="M6 8h7" stroke={g} strokeWidth="2.200" /><path d="M12 5l4 3-4 3z" fill={g} /></Ic></RightTool>
      <RightTool y="top-[240px]"><Ic><path d="M2 6l4-3v6z" fill={w} stroke={w} /><path d="M5 6h6c4 0 4 7-1 7" stroke={w} strokeWidth="1.800" /></Ic></RightTool>
      <RightTool y="top-[278px]"><Ic><path d="M14 6l-4-3v6z" fill="#777" stroke="#777" /><path d="M11 6H5c-4 0-4 7 1 7" stroke="#777" strokeWidth="1.800" /></Ic></RightTool>
      <RightTool y="top-[319px]"><Ic><rect x="1" y="1" width="10" height="10" fill={w} /><rect x="5" y="5" width="11" height="10" fill={w} stroke="#373737" /></Ic></RightTool>
      <RightTool y="top-[357px]"><Ic><circle cx="3.500" cy="12.500" r="2.300" stroke={w} strokeWidth="1.400" /><circle cx="12.500" cy="12.500" r="2.300" stroke={w} strokeWidth="1.400" /><path d="M5 11L12 1M11 11L4 1" stroke={w} strokeWidth="1.400" /></Ic></RightTool>
      <RightTool y="top-[393px]"><Ic><rect x="1.500" y="3" width="13" height="12" stroke={w} /><path d="M4 4h8v7l-2 3H4z" fill={w} /><rect x="5" y="1" width="6" height="3" fill={w} /></Ic></RightTool>
      <RightTool y="top-[434px]"><Ic><circle cx="7.500" cy="7" r="6.500" fill={w} /><rect x="4" y="4" width="7" height="6" stroke="#555" strokeDasharray="1 1" /><path d="M12 12l3 3" stroke={w} strokeWidth="2" /></Ic></RightTool>
      <RightTool y="top-[471px]"><Ic><circle cx="7.500" cy="7" r="6.500" fill={w} /><rect x="6" y="6" width="6" height="5" fill="#333" /><rect x="4" y="4" width="5" height="4" fill="#999" /><path d="M12 12l3 3" stroke={w} strokeWidth="2" /></Ic></RightTool>
      <RightTool y="top-[507px]"><Ic><circle cx="7.500" cy="7" r="6.500" fill={w} /><rect x="5" y="3" width="5" height="8" fill={w} stroke="#333" strokeWidth="1.200" /><path d="M12 12l3 3" stroke={w} strokeWidth="2" /></Ic></RightTool>
      <RightTool y="top-[544px]"><Ic><path d="M3 1H1v2M13 1h2v2M3 15H1v-2M13 15h2v-2" stroke="#aaa" /><rect x="3" y="3" width="10" height="10" stroke={w} /><path d="M8 5.500v5M5.500 8h5" stroke={w} /></Ic></RightTool>
      <div className="absolute left-[10px] top-[579px] flex h-[33px] w-[36px] items-center justify-center rounded-[5px] border border-[#222]">
        <Caret color="#eee" />
      </div>
    </div>
  );
}

function PaletteRow() {
  return (
    <div className="flex h-[33px] items-center bg-[#373737]">
      <div className="relative h-[33px] w-[34px] shrink-0 bg-white">
        <svg width="34" height="33" viewBox="0 0 34 33" stroke="#b8333a" strokeWidth="2" className="absolute inset-0">
          <path d="M5 2l25 29M30 2L5 31" />
        </svg>
      </div>
      <div className="ml-[2px] h-[33px] w-[32px] shrink-0 bg-black" />
      <div className="ml-[1px] h-[33px] w-[33px] shrink-0 bg-[#808080]" />
      <div className="ml-[1px] h-[33px] w-[34px] shrink-0 bg-white" />
      <div className="grid h-[33px] w-[1716px] shrink-0 grid-cols-[repeat(23,21.7px)_repeat(58,20.99px)] grid-rows-2 gap-y-[1px]">
        {PALETTE_TOP.map((color, i) => (
          <div key={`t${i}`} className="border-r border-[#373737]" style={{ background: color }} />
        ))}
        {PALETTE_BOTTOM.map((color, i) => (
          <div key={`b${i}`} className="border-r border-[#373737]" style={{ background: color }} />
        ))}
      </div>
      <svg width="14" height="9" viewBox="0 0 14 9" fill="none" stroke="#777" strokeWidth="2" className="ml-[4px]"><path d="M1 8l6-6 6 6" /></svg>
      <svg width="14" height="9" viewBox="0 0 14 9" fill="none" stroke="#eee" strokeWidth="2" className="ml-[9px] mt-[-5px]"><path d="M1 1l6 6 6-6" /></svg>
      <div className="ml-[8px] flex flex-col gap-[3px]">
        <div className="h-[2px] w-[14px] bg-[#eee]" />
        <div className="h-[2px] w-[14px] bg-[#eee]" />
        <div className="h-[2px] w-[14px] bg-[#eee]" />
      </div>
    </div>
  );
}

function StatusBar() {
  return (
    <div className="flex h-[42px] items-start overflow-hidden bg-[#373737] text-[14px] text-[#d4d4d4]">
      <div className="mt-[3px] grid w-[157px] shrink-0 grid-cols-[44px_auto] justify-start gap-x-[31px] text-[#bcbcbc] leading-[21px]">
        <span className="text-right">Fill:</span>
        <span>N/A</span>
        <span className="text-right">Stroke:</span>
        <span>N/A</span>
      </div>
      <span className="mt-[12px] w-[25px] shrink-0 pl-[6px] text-[#bcbcbc]">O:</span>
      <Spin value="100" className="mt-[2px] h-[50px] w-[72px] shrink-0" />
      <div className="ml-[12px] mt-[12px] h-[21px] w-[3px] shrink-0 bg-[#3b78d0]" />
      <span className="ml-[6px] mt-[12px] w-[66px] shrink-0">Layer 1</span>
      <svg width="16" height="14" viewBox="0 0 16 14" className="mt-[16px] shrink-0" fill="none" stroke="#eee" strokeWidth="1.800">
        <ellipse cx="8" cy="8" rx="5.500" ry="4.500" />
        <circle cx="8" cy="8" r="1.500" fill="#eee" />
        <path d="M2 1l3 3M14 1l-3 3M8 .5V3" />
      </svg>
      <Lock className="ml-[24px] mt-[14px]" />
      <div className="ml-[10px] mt-[3px] h-[36px] w-px shrink-0 bg-[#444]" />
      <span className="ml-[7px] mt-[12px] w-[1037px] shrink-0 text-[14.3px]">No objects selected. Click, Shift+click, Alt+scroll mouse on top of objects, or drag around objects to select.</span>
      <svg width="7" height="12" viewBox="0 0 7 12" className="ml-[5px] mt-[16px] shrink-0"><path d="M7 0v12L0 6z" fill="#777" /></svg>
      <div className="ml-[15px] mt-[2px] flex h-[50px] w-[77px] shrink-0 items-start gap-[4px] rounded-[5px] border border-[#202020] pl-[12px] pt-[9px]">
        <span className="text-[12.500px] italic">Page 1</span>
        <Caret color="#eee" className="mt-[6px]" />
      </div>
      <svg width="7" height="12" viewBox="0 0 7 12" className="ml-[14px] mt-[16px] shrink-0"><path d="M0 0v12l7-6z" fill="#777" /></svg>
      <div className="ml-[22px] mt-[3px] grid w-[69px] shrink-0 grid-cols-[auto_1fr] leading-[21px] text-[#bcbcbc]">
        <span>X:</span>
        <span className="text-right">147.54</span>
        <span>Y:</span>
        <span className="text-right">154.94</span>
      </div>
      <span className="ml-[14px] mt-[12px] w-[17px] shrink-0 text-[#bcbcbc]">Z:</span>
      <div className="mt-[2px] flex h-[50px] w-[89px] shrink-0 items-center overflow-hidden rounded-[5px] border border-[#1d4d85] pb-[10px]">
        <div className="ml-[7px] h-[20px] w-px bg-white" />
        <span className="flex-1 pl-[7px] text-[13.500px]">64%</span>
        <PlusMinus color="#eee" />
      </div>
      <span className="ml-[10px] mt-[12px] w-[17px] shrink-0 text-[#bcbcbc]">R:</span>
      <div className="mt-[2px] flex h-[50px] w-[98px] shrink-0 items-center overflow-hidden rounded-[5px] border border-[#202020] pb-[10px]">
        <span className="flex-1 pl-[18px]">0.00°</span>
        <PlusMinus color="#eee" />
      </div>
    </div>
  );
}

export default function App() {
  return (
    <div className="flex h-[1018px] w-[1917px] flex-col overflow-hidden bg-[#373737] font-['Noto_Sans',sans-serif]">
      <TopBars />
      <div className="flex h-[842px]">
        <LeftTools />
        <Workspace />
        <Panel />
        <RightTools />
      </div>
      <PaletteRow />
      <StatusBar />
    </div>
  );
}
